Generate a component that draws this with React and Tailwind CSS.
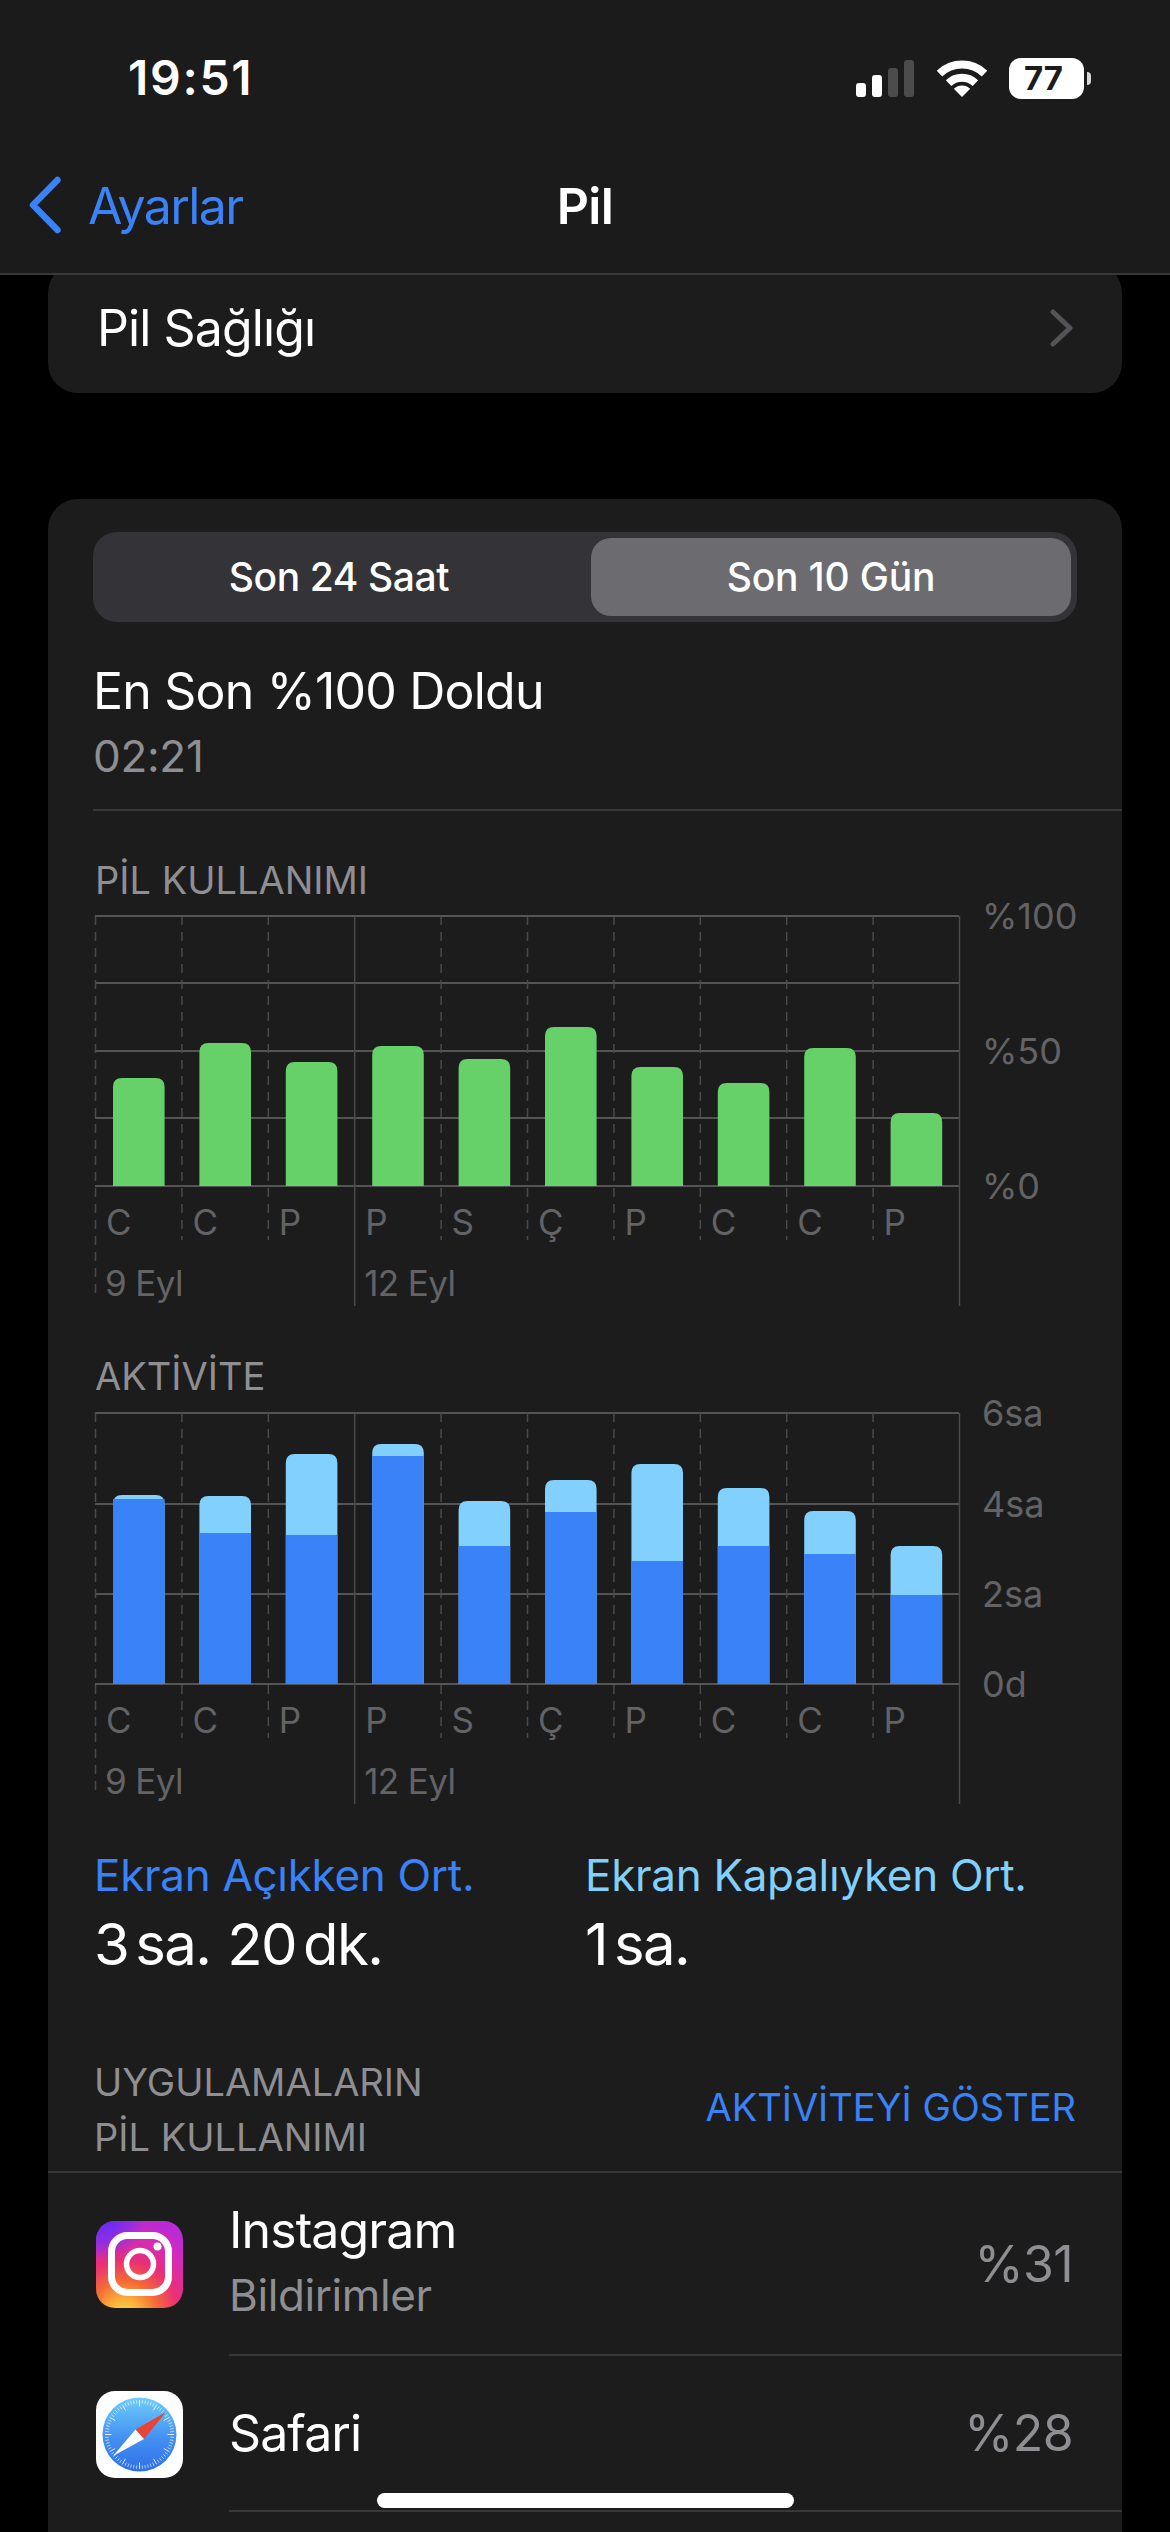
import React from 'react'

const FONT = 'font-["Inter","Liberation_Sans",sans-serif]'

const DAYS = ['C', 'C', 'P', 'P', 'S', 'Ç', 'P', 'C', 'C', 'P']
const USAGE = [108, 143, 124, 140, 127, 159, 119, 103, 138, 73]
const SCREEN_ON = [185, 151, 149, 228, 138, 172, 123, 138, 130, 89]
const SCREEN_TOTAL = [189, 188, 230, 240, 183, 204, 220, 196, 173, 138]

const COL = 86.4
const GRID_W = 864

// rounded only on the top corners
function topBar(x, bottom, w, h, r = 9) {
  const y = bottom - h
  const rr = Math.min(r, h)
  return `M${x} ${bottom}V${y + rr}Q${x} ${y} ${x + rr} ${y}H${x + w - rr}Q${x + w} ${y} ${x + w} ${y + rr}V${bottom}Z`
}

function ChartFrame({ hLines, axis, height, children }) {
  const base = hLines[hLines.length - 1]
  return (
    <svg width="1040" height={height} className="block overflow-visible">
      {hLines.map((y) => (
        <line key={y} x1="0" x2={GRID_W} y1={y} y2={y} stroke="#545456" strokeWidth="2" />
      ))}
      {Array.from({ length: 11 }, (_, i) => {
        const x = i * COL + 0.5
        const solid = i === 3 || i === 10
        if (solid) return <line key={i} x1={x} x2={x} y1="0" y2={base + 120} stroke="#4a4a4c" strokeWidth="1.5" />
        return (
          <line key={i} x1={x} x2={x} y1="0" y2={i === 0 ? base + 113 : base + 54} stroke="#4a4a4c" strokeWidth="1.5" strokeDasharray="9 7" />
        )
      })}
      {children}
      {DAYS.map((d, i) => (
        <text key={i} x={i * COL + 11} y={base + 49} fontSize="35" fill="#636366">{d}</text>
      ))}
      <text x="10" y={base + 110} fontSize="35" letterSpacing="-0.6" fill="#636366">9 Eyl</text>
      <text x={3 * COL + 10} y={base + 110} fontSize="35" letterSpacing="-0.6" fill="#636366">12 Eyl</text>
      {axis.map(([label, y]) => (
        <text key={label} x={GRID_W + 23} y={y + 13} fontSize="36" fill="#636366">{label}</text>
      ))}
    </svg>
  )
}

function UsageChart() {
  const lines = [0, 67, 135, 202, 270]
  return (
    <ChartFrame hLines={lines} height={390} axis={[['%100', 0], ['%50', 135], ['%0', 270]]}>
      {USAGE.map((h, i) => (
        <path key={i} d={topBar(18 + i * COL, 270, 51.6, h)} fill="#66d169" />
      ))}
    </ChartFrame>
  )
}

function ActivityChart() {
  const lines = [0, 91, 181, 271]
  return (
    <ChartFrame hLines={lines} height={390} axis={[['6sa', 0], ['4sa', 91], ['2sa', 181], ['0d', 271]]}>
      {SCREEN_TOTAL.map((h, i) => (
        <g key={i}>
          <path d={topBar(18 + i * COL, 271, 51.6, h)} fill="#81d0fe" />
          <rect x={18 + i * COL} y={271 - SCREEN_ON[i]} width="51.6" height={SCREEN_ON[i]} fill="#3a82f7" />
        </g>
      ))}
    </ChartFrame>
  )
}

function WifiIcon() {
  return (
    <svg width="50" height="37" viewBox="0 0 50 37" fill="none">
      <path d="M2.5 13.6a32.5 32.5 0 0 1 45 0" stroke="#fff" strokeWidth="8" />
      <path d="M11.6 23.2a19.5 19.5 0 0 1 26.8 0" stroke="#fff" strokeWidth="8" />
      <path d="M25 37 16.8 28.8a11.6 11.6 0 0 1 16.4 0Z" fill="#fff" />
    </svg>
  )
}

function StatusBar() {
  const bars = [
    'h-[14px] bg-white',
    'h-[22px] bg-white',
    'h-[29px] bg-[#4c4c4c]',
    'h-[37px] bg-[#4c4c4c]',
  ]
  return (
    <div className="flex h-[172px] items-center justify-between pb-[16px] pl-[128px] pr-[79px]">
      <span className="text-[48px] font-semibold leading-none tracking-[1.7px] text-white">19:51</span>
      <div className="flex items-center">
        <div className="flex items-end gap-[6px]">
          {bars.map((c) => (
            <div key={c} className={`w-[10px] rounded-[3px] ${c}`} />
          ))}
        </div>
        <div className="ml-[23px]">
          <WifiIcon />
        </div>
        <div className="ml-[22px] flex h-[41px] w-[75px] items-center justify-center rounded-[12px] bg-white pr-[6px] text-[33px] font-bold leading-none text-[#1c1c1c]">
          77
        </div>
        <div className="ml-[3px] h-[13px] w-[4px] rounded-r-full bg-[#d8d8d8]" />
      </div>
    </div>
  )
}

function NavBar() {
  return (
    <div className="relative flex h-[101px] items-start justify-center">
      <div className="absolute left-[28px] top-[4px] flex items-start">
        <svg width="34" height="58" viewBox="0 0 34 58" fill="none">
          <path d="M29.5 4 5 29l24.5 25" stroke="#3a82f7" strokeWidth="6.5" strokeLinecap="round" strokeLinejoin="round" />
        </svg>
        <span className="ml-[26px] text-[50px] leading-[60px] tracking-[-1.6px] text-[#3a82f7]">Ayarlar</span>
      </div>
      <span className="mt-[4px] text-[50px] font-semibold leading-[60px] tracking-[-0.6px] text-white">Pil</span>
    </div>
  )
}

function InstagramIcon() {
  return (
    <svg width="87" height="87" viewBox="0 0 87 87" className="block">
      <defs>
        <radialGradient id="igWarm" cx="0.32" cy="1.08" r="1.15">
          <stop offset="0" stopColor="#ffdd3f" />
          <stop offset="0.16" stopColor="#fbb03b" />
          <stop offset="0.34" stopColor="#f56a35" />
          <stop offset="0.55" stopColor="#e92f76" />
          <stop offset="0.78" stopColor="#d42bbb" />
          <stop offset="1" stopColor="#b72ad6" />
        </radialGradient>
        <radialGradient id="igCool" cx="0.08" cy="-0.05" r="0.5">
          <stop offset="0" stopColor="#5a2cf5" />
          <stop offset="0.6" stopColor="#7a2ef0" stopOpacity="0.75" />
          <stop offset="1" stopColor="#8a2ee0" stopOpacity="0" />
        </radialGradient>
      </defs>
      <rect width="87" height="87" rx="19" fill="url(#igWarm)" />
      <rect width="87" height="87" rx="19" fill="url(#igCool)" />
      <rect x="15.5" y="14.5" width="57" height="57" rx="16" fill="none" stroke="#fff" strokeWidth="7" />
      <circle cx="44" cy="43" r="13.5" fill="none" stroke="#fff" strokeWidth="5.5" />
      <circle cx="61.5" cy="25.5" r="4" fill="#fff" />
    </svg>
  )
}

function SafariIcon() {
  const ticks = Array.from({ length: 72 }, (_, i) => (i * Math.PI * 2) / 72)
  return (
    <svg width="87" height="87" viewBox="0 0 87 87" className="block">
      <defs>
        <linearGradient id="safariDial" x1="0" y1="0" x2="0" y2="1">
          <stop offset="0" stopColor="#6fcdf9" />
          <stop offset="0.55" stopColor="#4390f2" />
          <stop offset="1" stopColor="#2f6fe8" />
        </linearGradient>
      </defs>
      <rect width="87" height="87" rx="19" fill="#fff" />
      <circle cx="43.5" cy="43.5" r="37" fill="url(#safariDial)" />
      {ticks.map((a, i) => {
        const inner = i % 6 === 0 ? 28 : 31
        return (
          <line
            key={i}
            x1={43.5 + Math.cos(a) * inner}
            y1={43.5 + Math.sin(a) * inner}
            x2={43.5 + Math.cos(a) * 34.5}
            y2={43.5 + Math.sin(a) * 34.5}
            stroke="#fff"
            strokeOpacity={i % 6 === 0 ? 0.95 : 0.7}
            strokeWidth="0.9"
          />
        )
      })}
      <polygon points="70,21 39.5,38.5 48,48" fill="#ea4335" />
      <polygon points="17,65 39.5,38.5 48,48" fill="#fff" />
    </svg>
  )
}

function AppRow({ icon, name, sub, percent, rowClass }) {
  return (
    <div className={`flex items-center pl-[48px] ${rowClass}`}>
      <div className="w-[87px] shrink-0">{icon}</div>
      <div className="ml-[46px] flex h-full flex-1 items-center justify-between border-b-2 border-[#38383a] pr-[49px]">
        <div className={sub ? 'pb-[6px]' : ''}>
          <div className="text-[50px] leading-[60px] tracking-[-0.9px] text-white">{name}</div>
          {sub && <div className="mt-[8px] text-[44px] leading-[54px] tracking-[-0.4px] text-[#8e8e93]">{sub}</div>}
        </div>
        <span className="text-[50px] leading-none tracking-[-0.6px] text-[#8e8e93]">{percent}</span>
      </div>
    </div>
  )
}

// value line of the averages block, e.g. "3 sa."
function Duration({ parts }) {
  return (
    <div className="mt-[7px] flex text-[58px] leading-[70px] tracking-[-1.6px] text-white">
      {parts.map(([num, unit]) => (
        <span key={unit} className="mr-[17px] flex gap-[7px]">
          <span>{num}</span>
          <span>{unit}</span>
        </span>
      ))}
    </div>
  )
}

export default function App() {
  return (
    <div className={`relative flex h-[2532px] w-[1170px] flex-col overflow-hidden bg-black ${FONT}`}>
      <header className="relative z-10 h-[275px] shrink-0 border-b-2 border-[#38383a] bg-[#1b1b1b]">
        <StatusBar />
        <NavBar />
      </header>

      {/* scrolled list: the first group slides under the nav bar */}
      <div className="-mt-[12px] shrink-0 px-[48px]">
        <div className="flex h-[130px] items-center justify-between rounded-[30px] bg-[#1c1c1c] pl-[49px] pr-[48px]">
          <span className="text-[50px] leading-[60px] tracking-[-0.9px] text-white">Pil Sağlığı</span>
          <svg width="24" height="38" viewBox="0 0 24 38" fill="none">
            <path d="M3 3l17 16L3 35" stroke="#545458" strokeWidth="5" strokeLinecap="round" strokeLinejoin="round" />
          </svg>
        </div>
      </div>

      <div className="mx-[48px] mt-[106px] flex-1 rounded-t-[30px] bg-[#1c1c1c] pt-[33px]">
        <div className="ml-[45px] mr-[45px] flex h-[90px] rounded-[24px] bg-[#333338] p-[6px]">
          <div className="flex w-[492px] items-center justify-center pr-[12px] text-[39px] font-medium tracking-[-0.4px] text-white">Son 24 Saat</div>
          <div className="flex flex-1 items-center justify-center rounded-[20px] bg-[#6b6b70] text-[39px] font-medium tracking-[-0.2px] text-white">Son 10 Gün</div>
        </div>

        <div className="ml-[45px] mt-[39px] border-b-2 border-[#38383a] pb-[26px]">
          <div className="text-[50px] leading-[60px] tracking-[-0.8px] text-white">En Son %100 Doldu</div>
          <div className="mt-[8px] text-[44px] leading-[54px] tracking-[-0.3px] text-[#8e8e93]">02:21</div>
        </div>

        <div className="ml-[47px] mt-[46px]">
          <div className="text-[38px] leading-[46px] text-[#8e8e93]">PİL KULLANIMI</div>
          <div className="mt-[13px]">
            <UsageChart />
          </div>
        </div>

        <div className="ml-[47px] mt-[47px]">
          <div className="text-[38px] leading-[46px] text-[#8e8e93]">AKTİVİTE</div>
          <div className="mt-[14px]">
            <ActivityChart />
          </div>
        </div>

        <div className="ml-[46px] mt-[45px] flex">
          <div className="w-[491px]">
            <div className="text-[44px] leading-[54px] tracking-[-0.3px] text-[#3a82f7]">Ekran Açıkken Ort.</div>
            <Duration parts={[['3', 'sa.'], ['20', 'dk.']]} />
          </div>
          <div>
            <div className="text-[44px] leading-[54px] tracking-[-0.3px] text-[#81d0fe]">Ekran Kapalıyken Ort.</div>
            <Duration parts={[['1', 'sa.']]} />
          </div>
        </div>

        <div className="ml-[46px] mr-[46px] mt-[76px] flex items-center justify-between">
          <div className="text-[38px] leading-[55px] text-[#8e8e93]">
            UYGULAMALARIN<br />PİL KULLANIMI
          </div>
          <div className="pb-[6px] text-[38px] leading-[46px] text-[#3a82f7]">AKTİVİTEYİ GÖSTER</div>
        </div>

        <div className="mt-[6px] border-t-2 border-[#38383a]">
          <AppRow rowClass="h-[183px]" icon={<InstagramIcon />} name="Instagram" sub="Bildirimler" percent="%31" />
          <AppRow rowClass="h-[156px]" icon={<SafariIcon />} name="Safari" percent="%28" />
        </div>
      </div>

      <div className="absolute bottom-[24px] left-[377px] h-[15px] w-[417px] rounded-full bg-white" />
    </div>
  )
}
